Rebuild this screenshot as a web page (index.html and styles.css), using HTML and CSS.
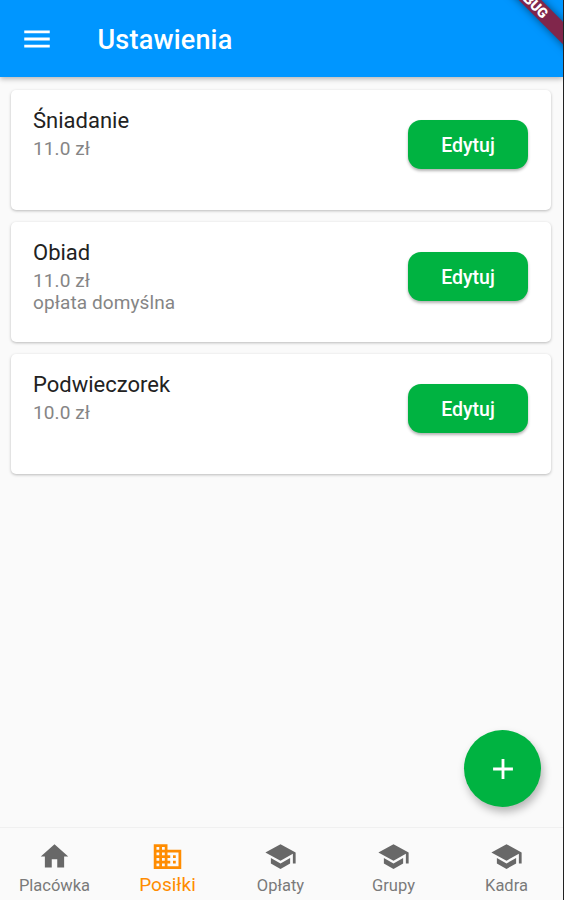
FILE: index.html
```html
<!DOCTYPE html>
<html lang="pl">
<head>
  <meta charset="UTF-8" />
  <meta name="viewport" content="width=device-width, initial-scale=1.0" />
  <title>Ustawienia</title>
  <link rel="stylesheet" href="styles.css">
</head>
<body>

<div class="app">
  <header class="topbar">
    <svg class="menu" viewBox="0 0 24 24"><path d="M3 18h18v-2H3v2zm0-5h18v-2H3v2zm0-7v2h18V6H3z"/></svg>
    <h1>Ustawienia</h1>
  </header>
  <div class="debug">DEBUG</div>

  <main>
    <div class="card">
      <div class="info">
        <h2>Śniadanie</h2>
        <p>11.0 zł</p>
      </div>
      <button class="edit">Edytuj</button>
    </div>
    <div class="card">
      <div class="info">
        <h2>Obiad</h2>
        <p>11.0 zł</p>
        <p>opłata domyślna</p>
      </div>
      <button class="edit">Edytuj</button>
    </div>
    <div class="card">
      <div class="info">
        <h2>Podwieczorek</h2>
        <p>10.0 zł</p>
      </div>
      <button class="edit">Edytuj</button>
    </div>
  </main>

  <button class="fab" aria-label="Dodaj">
    <svg viewBox="0 0 24 24"><path d="M19 13h-6v6h-2v-6H5v-2h6V5h2v6h6v2z"/></svg>
  </button>

  <nav>
    <a>
      <svg viewBox="0 0 24 24"><path d="M10 20v-6h4v6h5v-8h3L12 3 2 12h3v8z"/></svg>
      <span>Placówka</span>
    </a>
    <a class="active">
      <svg viewBox="0 0 24 24"><path d="M12 7V3H2v18h20V7H12zM6 19H4v-2h2v2zm0-4H4v-2h2v2zm0-4H4V9h2v2zm0-4H4V5h2v2zm4 12H8v-2h2v2zm0-4H8v-2h2v2zm0-4H8V9h2v2zm0-4H8V5h2v2zm10 12h-8v-2h2v-2h-2v-2h2v-2h-2V9h8v10zm-2-8h-2v2h2v-2zm0 4h-2v2h2v-2z"/></svg>
      <span>Posiłki</span>
    </a>
    <a>
      <svg viewBox="0 0 24 24"><path d="M5 13.18v4L12 21l7-3.82v-4L12 17l-7-3.82zM12 3L1 9l11 6 9-4.91V17h2V9L12 3z"/></svg>
      <span>Opłaty</span>
    </a>
    <a>
      <svg viewBox="0 0 24 24"><path d="M5 13.18v4L12 21l7-3.82v-4L12 17l-7-3.82zM12 3L1 9l11 6 9-4.91V17h2V9L12 3z"/></svg>
      <span>Grupy</span>
    </a>
    <a>
      <svg viewBox="0 0 24 24"><path d="M5 13.18v4L12 21l7-3.82v-4L12 17l-7-3.82zM12 3L1 9l11 6 9-4.91V17h2V9L12 3z"/></svg>
      <span>Kadra</span>
    </a>
  </nav>
</div>

</body>
</html>
```
FILE: styles.css
```css
* { box-sizing: border-box; }
body { margin: 0; font-family: Roboto, sans-serif; background: #fafafa; }
h1, h2, p { margin: 0; }
svg { display: block; fill: currentColor; }
.app { position: relative; display: flex; flex-direction: column; height: 900px; border-right: 1px solid #222; overflow: hidden; }

.topbar { display: flex; align-items: center; height: 77px; padding: 2px 20px 0; background: #0096ff; color: white; box-shadow: 0 2px 5px rgba(0,0,0,0.28); }
.menu { width: 34px; height: 34px; margin-bottom: 2px; }
h1 { margin-left: 43.5px; font-size: 27px; font-weight: 500; letter-spacing: 0.2px; }
.debug { position: absolute; top: -8px; left: 430px; width: 200px; height: 16px; line-height: 16px; transform: rotate(45deg); background: #80264b; color: white; font-size: 14px; font-weight: 900; text-align: center; box-shadow: 0 0 8px rgba(0,0,0,0.5); }

main { flex: 1; display: flex; flex-direction: column; gap: 12px; padding: 13px 12px 0 11px; }
.card { display: flex; justify-content: space-between; align-items: flex-start; height: 120px; padding: 18px 23px 0 22px; background: white; border-radius: 5px; box-shadow: 0 1px 3px rgba(0,0,0,0.26); }
h2 { font-size: 22px; font-weight: 400; line-height: 26px; color: #222; margin-bottom: 4px; }
.info p { font-size: 19px; line-height: 22px; letter-spacing: 0.1px; color: #858585; }
.edit { width: 120px; height: 49px; margin-top: 12px; padding: 2px 0 0; border: none; border-radius: 13px; background: #00b341; color: white; font-family: inherit; font-size: 19.5px; font-weight: 500; box-shadow: 0 2px 3px rgba(0,0,0,0.3); }

.fab { position: absolute; right: 22px; bottom: 93px; display: flex; align-items: center; justify-content: center; width: 77px; height: 77px; padding: 0; border: none; border-radius: 50%; background: #00b341; color: white; box-shadow: 2px 5px 9px rgba(0,0,0,0.28); }
.fab svg { width: 34px; height: 34px; }

nav { display: flex; height: 73px; margin-left: -2px; border-top: 1px solid #f0f0f0; color: #7a7a7a; }
nav a { flex: 1; display: flex; flex-direction: column; align-items: center; padding-top: 12px; }
nav svg { width: 33px; height: 33px; fill: #686868; }
nav span { margin-top: 3px; font-size: 16.5px; line-height: 20px; }
.active { color: #ff8c00; }
.active svg { fill: #ff8c00; }
.active span { margin-top: 2px; font-size: 19px; }
```
